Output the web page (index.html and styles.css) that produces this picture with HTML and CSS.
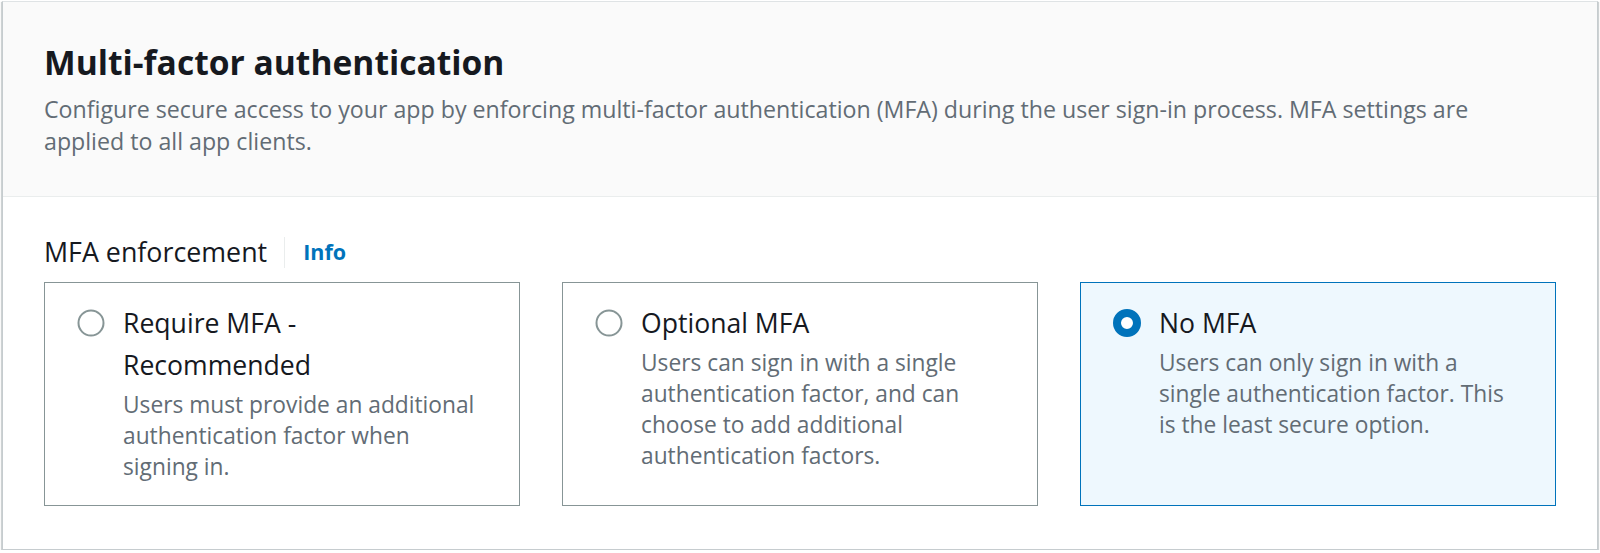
FILE: index.html
```html
<!DOCTYPE html>
<html lang="en">
<head>
<meta charset="utf-8">
<title>Multi-factor authentication</title>
<link rel="stylesheet" href="styles.css">
</head>
<body>
<section class="container">
  <header class="container-header">
    <h2 class="title">Multi-factor authentication</h2>
    <p class="header-desc">Configure secure access to your app by enforcing multi-factor authentication (MFA) during the user sign-in process. MFA settings are applied to all app clients.</p>
  </header>
  <div class="container-body">
    <div class="field-label">
      <span class="label-text">MFA enforcement</span>
      <span class="divider"></span>
      <a class="info-link" href="#">Info</a>
    </div>
    <div class="tiles">
      <label class="tile">
        <span class="radio">
          <svg viewBox="0 0 28 28" width="28" height="28"><circle cx="14" cy="14" r="12.5" fill="#fff" stroke="#879596" stroke-width="2"/></svg>
        </span>
        <span class="tile-text">
          <span class="tile-title">Require MFA - Recommended</span>
          <span class="tile-desc">Users must provide an additional authentication factor when signing in.</span>
        </span>
      </label>
      <label class="tile">
        <span class="radio">
          <svg viewBox="0 0 28 28" width="28" height="28"><circle cx="14" cy="14" r="12.5" fill="#fff" stroke="#879596" stroke-width="2"/></svg>
        </span>
        <span class="tile-text">
          <span class="tile-title">Optional MFA</span>
          <span class="tile-desc">Users can sign in with a single authentication factor, and can choose to add additional authentication factors.</span>
        </span>
      </label>
      <label class="tile tile-selected">
        <span class="radio">
          <svg viewBox="0 0 28 28" width="28" height="28"><circle cx="14" cy="14" r="10" fill="#fff" stroke="#0073bb" stroke-width="8"/></svg>
        </span>
        <span class="tile-text">
          <span class="tile-title">No MFA</span>
          <span class="tile-desc">Users can only sign in with a single authentication factor. This is the least secure option.</span>
        </span>
      </label>
    </div>
  </div>
</section>
</body>
</html>
```

FILE: styles.css
```css
* { box-sizing: border-box; }

html, body {
  margin: 0;
  background: #ffffff;
}

body {
  padding: 1px 2px 0 2px;
  font-family: "Open Sans", "Noto Sans", Arial, sans-serif;
  color: #16191f;
}

.container {
  background: #ffffff;
  border: 1px solid #dfe3e5;
  border-left-color: #c6cccf;
  border-right-color: #c6cccf;
  border-bottom-color: #c6cccf;
  box-shadow: 0 1px 1px 0 rgba(0, 28, 36, 0.3), 1px 1px 1px 0 rgba(0, 28, 36, 0.15), -1px 1px 1px 0 rgba(0, 28, 36, 0.15);
}

.container-header {
  background: #fafafa;
  border-bottom: 1px solid #eaeded;
  padding: 40px 41px 39px 41px;
}

.title {
  margin: 0;
  font-size: 33.6px;
  line-height: 40px;
  font-weight: 700;
  color: #16191f;
}

.header-desc {
  margin: 11px 0 0 0;
  max-width: 1490px;
  font-size: 23.2px;
  line-height: 32px;
  color: #626c75;
}

.container-body {
  padding: 38px 41px 43px 41px;
}

.field-label {
  display: flex;
  align-items: center;
  height: 34px;
  margin-bottom: 13px;
}

.label-text {
  font-size: 26.8px;
  line-height: 34px;
  color: #16191f;
}

.divider {
  width: 1px;
  height: 31px;
  background: #eaeded;
  margin: 0 18px 0 17px;
}

.info-link {
  font-size: 21.5px;
  line-height: 34px;
  font-weight: 700;
  color: #0073bb;
  text-decoration: none;
}

.tiles {
  display: grid;
  grid-template-columns: repeat(3, 1fr);
  gap: 42px;
}

.tile {
  display: flex;
  border: 1px solid #879596;
  background: #ffffff;
  padding: 19px 36px 23px 32px;
}

.tile-selected {
  border-color: #0073bb;
  background: #eef8fe;
}

.radio {
  flex: none;
  width: 28px;
  height: 28px;
  margin-top: 7px;
  margin-right: 18px;
}

.radio svg {
  display: block;
}

.tile-text {
  display: flex;
  flex-direction: column;
  min-width: 0;
}

.tile-title {
  font-size: 26.6px;
  line-height: 42px;
  color: #16191f;
}

.tile-desc {
  margin-top: 3px;
  font-size: 22.75px;
  line-height: 31px;
  color: #626c75;
}
```
